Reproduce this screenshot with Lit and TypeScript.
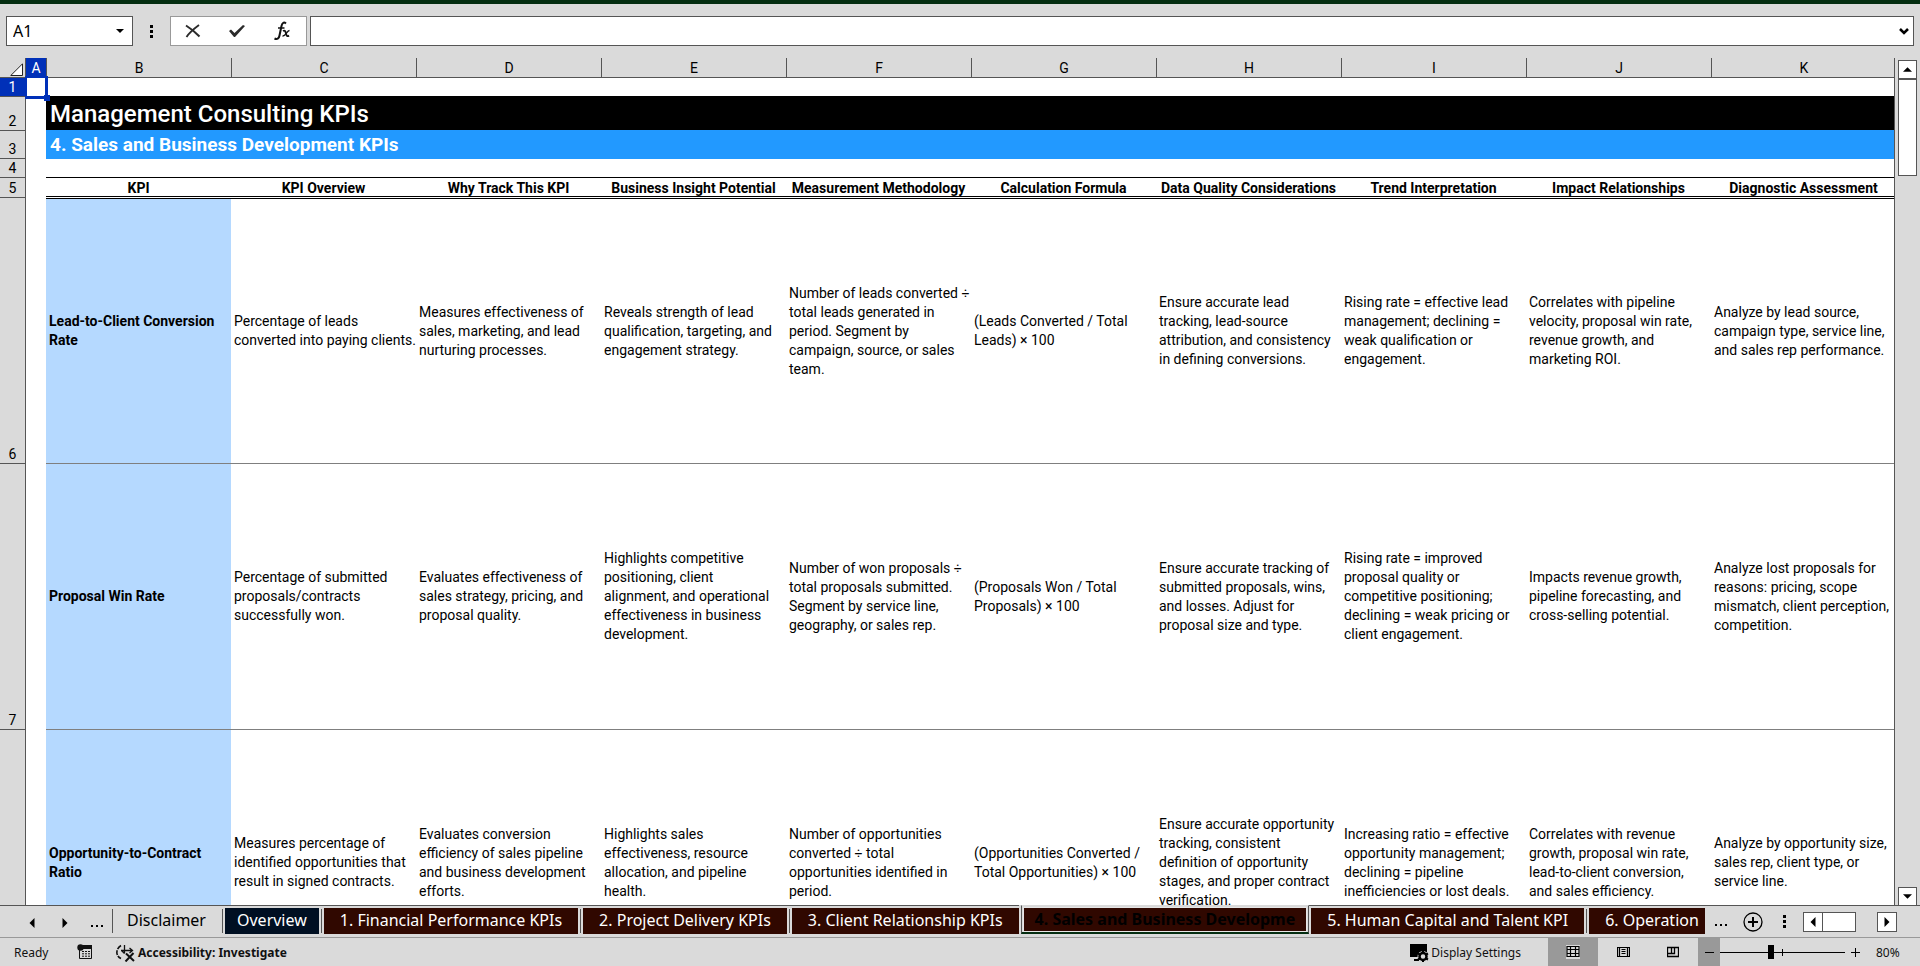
import {LitElement, html, css, svg, nothing} from "lit";
import {customElement, state} from "lit/decorators.js";
import {classMap} from "lit/directives/class-map.js";

const LETTERS = ["B", "C", "D", "E", "F", "G", "H", "I", "J", "K"];

const HEADINGS = [
  "KPI", "KPI Overview", "Why Track This KPI", "Business Insight Potential",
  "Measurement Methodology", "Calculation Formula", "Data Quality Considerations",
  "Trend Interpretation", "Impact Relationships", "Diagnostic Assessment",
];

const KPIS: {row: number; cells: string[]}[] = [
  {
    row: 6,
    cells: [
      "Lead-to-Client Conversion\nRate",
      "Percentage of leads\nconverted into paying clients.",
      "Measures effectiveness of\nsales, marketing, and lead\nnurturing processes.",
      "Reveals strength of lead\nqualification, targeting, and\nengagement strategy.",
      "Number of leads converted ÷\ntotal leads generated in\nperiod. Segment by\ncampaign, source, or sales\nteam.",
      "(Leads Converted / Total\nLeads) × 100",
      "Ensure accurate lead\ntracking, lead-source\nattribution, and consistency\nin defining conversions.",
      "Rising rate = effective lead\nmanagement; declining =\nweak qualification or\nengagement.",
      "Correlates with pipeline\nvelocity, proposal win rate,\nrevenue growth, and\nmarketing ROI.",
      "Analyze by lead source,\ncampaign type, service line,\nand sales rep performance.",
    ],
  },
  {
    row: 7,
    cells: [
      "Proposal Win Rate",
      "Percentage of submitted\nproposals/contracts\nsuccessfully won.",
      "Evaluates effectiveness of\nsales strategy, pricing, and\nproposal quality.",
      "Highlights competitive\npositioning, client\nalignment, and operational\neffectiveness in business\ndevelopment.",
      "Number of won proposals ÷\ntotal proposals submitted.\nSegment by service line,\ngeography, or sales rep.",
      "(Proposals Won / Total\nProposals) × 100",
      "Ensure accurate tracking of\nsubmitted proposals, wins,\nand losses. Adjust for\nproposal size and type.",
      "Rising rate = improved\nproposal quality or\ncompetitive positioning;\ndeclining = weak pricing or\nclient engagement.",
      "Impacts revenue growth,\npipeline forecasting, and\ncross-selling potential.",
      "Analyze lost proposals for\nreasons: pricing, scope\nmismatch, client perception,\ncompetition.",
    ],
  },
  {
    row: 8,
    cells: [
      "Opportunity-to-Contract\nRatio",
      "Measures percentage of\nidentified opportunities that\nresult in signed contracts.",
      "Evaluates conversion\nefficiency of sales pipeline\nand business development\nefforts.",
      "Highlights sales\neffectiveness, resource\nallocation, and pipeline\nhealth.",
      "Number of opportunities\nconverted ÷ total\nopportunities identified in\nperiod.",
      "(Opportunities Converted /\nTotal Opportunities) × 100",
      "Ensure accurate opportunity\ntracking, consistent\ndefinition of opportunity\nstages, and proper contract\nverification.",
      "Increasing ratio = effective\nopportunity management;\ndeclining = pipeline\ninefficiencies or lost deals.",
      "Correlates with revenue\ngrowth, proposal win rate,\nlead-to-client conversion,\nand sales efficiency.",
      "Analyze by opportunity size,\nsales rep, client type, or\nservice line.",
    ],
  },
];

const TABS = [
  {label: "Disclaimer", tone: "plain"},
  {label: "Overview", tone: "navy"},
  {label: "1. Financial Performance KPIs", tone: "maroon"},
  {label: "2. Project Delivery KPIs", tone: "maroon"},
  {label: "3. Client Relationship KPIs", tone: "maroon"},
  {label: "4. Sales and Business Developme", tone: "maroon"},
  {label: "5. Human Capital and Talent KPI", tone: "maroon"},
  {label: "6. Operation", tone: "maroon"},
];

const base = css`
  * { box-sizing: border-box; }
  button {
    margin: 0; padding: 0; border: 0; background: none; color: inherit; font: inherit;
    display: inline-flex; align-items: center; justify-content: center; cursor: pointer;
  }
  input { margin: 0; font: inherit; color: inherit; }
  svg { display: block; flex: none; }
`;

const arrow = (d: string, size = 8) => svg`<svg width=${size} height=${size} viewBox="0 0 8 8"><path d=${d} fill="#000"/></svg>`;
const LEFT = "M6 0v8L2 4z";
const RIGHT = "M2 0v8l4-4z";
const dots = html`<svg width="3" height="15" viewBox="0 0 3 15"><path d="M0 1h3v3H0zM0 6h3v3H0zM0 11h3v3H0z" fill="#000"/></svg>`;

@customElement("formula-bar")
class FormulaBar extends LitElement {
  static styles = [base, css`
    :host {
      display: flex; align-items: center; padding: 12px 6px;
      border-top: 4px solid #032d10; font: 16px "Noto Sans", sans-serif;
    }
    .name {
      display: flex; width: 127px; height: 30px; background: #fff; border: 1px solid #555;
    }
    .name input { flex: 1; min-width: 0; border: 0; padding: 0 0 0 6px; background: none; outline: 0; }
    .name button { width: 24px; }
    .grip { width: 37px; display: flex; justify-content: center; }
    .actions {
      display: flex; width: 137px; height: 30px; background: #fff; border: 1px solid #999;
      margin-right: 3px; padding-right: 2px;
    }
    .actions button { flex: 1; }
    .formula { flex: 1; display: flex; height: 30px; background: #fff; border: 1px solid #555; }
    .formula input { flex: 1; min-width: 0; border: 0; background: none; outline: 0; padding: 0 6px; }
    .formula button { width: 19px; }
  `];

  render() {
    return html`
      <div class="name">
        <input aria-label="Name box" value="A1">
        <button aria-label="Choose a name">${arrow("M0 2h8L4 6z")}</button>
      </div>
      <div class="grip">${dots}</div>
      <div class="actions">
        <button aria-label="Cancel">
          <svg width="16" height="14" viewBox="0 0 16 14" fill="none" stroke="#2b2b2b"><path d="M1 1.500C5 4 11 9 14.500 12.500" stroke-width="2"/><path d="M14 1C10 4 4 9 1.500 13" stroke-width="1.800"/></svg>
        </button>
        <button aria-label="Enter">
          <svg width="18" height="14" viewBox="0 0 18 14"><path d="M1 7l2-1.500 3.500 3.500L15 1l2 1L7 13H6z" fill="#2b2b2b"/></svg>
        </button>
        <button aria-label="Insert function">
          <svg width="18" height="20" viewBox="0 0 18 20" fill="none" stroke="#111"><path d="M13 2.500C11 .800 9.200 1.500 8.500 5L6.500 14.500C6 17.800 4 18.800 1.500 17.500" stroke-width="2"/><path d="M5 7h6.500" stroke-width="1.500"/><path d="M10 10c2-1.200 2.600.5 3 2.500s1.200 3.500 3 2" stroke-width="1.800"/><path d="M16.500 9.500C14 9.500 12.500 15.500 9.500 15" stroke-width="1.400"/></svg>
        </button>
      </div>
      <div class="formula">
        <input aria-label="Formula">
        <button aria-label="Expand formula bar">
          <svg width="10" height="7" viewBox="0 0 10 7"><path d="M1 1l4 4 4-4" fill="none" stroke="#000" stroke-width="2.500"/></svg>
        </button>
      </div>`;
  }
}

@customElement("sheet-grid")
class SheetGrid extends LitElement {
  static styles = [base, css`
    :host { display: flex; min-height: 0; font: 14px/19px Roboto, sans-serif; color: #000; }
    .view { flex: 1; min-width: 0; overflow: hidden; background: #fff; border-right: 1px solid #555; }
    table { width: calc(100% + 2px); table-layout: fixed; border-collapse: separate; border-spacing: 0; }
    th, td { padding: 0; }
    .num-col { width: 26px; }
    .a-col { width: 20px; }
    .letters th {
      height: 20px; font-weight: 400; background: #dadada; text-align: center; line-height: 18px;
      border-bottom: 1px solid #555; border-left: 1px solid #555;
    }
    .letters .corner, .letters .on { border-left: 0; }
    .letters .corner { border-right: 1px solid #555; }
    .corner svg { margin: 4px 0 1px 10px; }
    .letters .on, .num.on { background: #0030b8; color: #fff; }
    .num {
      font-weight: 400; background: #dadada; text-align: center; vertical-align: bottom;
      border-right: 1px solid #555; border-bottom: 1px solid #555; line-height: 18px;
    }
    .r1 { height: 19px; }
    .r2 { height: 34px; }
    .r3 { height: 28px; }
    .r4 { height: 19px; }
    .r5 { height: 20px; }
    .kpi { height: 266px; }
    .black { border-bottom: 1px solid #000; }
    .title {
      background: #000; color: #fff; border-bottom: 1px solid #2299ff; padding: 0 4px;
      text-align: left; font-size: 24px; line-height: 32px; font-weight: 500;
    }
    .section {
      background: #2299ff; color: #fff; padding: 0 4px;
      text-align: left; font-size: 19px; line-height: 26px; font-weight: 700;
    }
    .heading {
      font-weight: 700; text-align: center; line-height: 18px; white-space: nowrap;
      border-bottom: 1px solid #fff; box-shadow: inset 0 -1px #000;
    }
    .cell, .label { text-align: left; vertical-align: middle; white-space: pre; padding: 0 3px; border-bottom: 1px solid #7f7f7f; }
    .label { background: #b5d9ff; font-weight: 700; }
    .first .cell, .first .label { border-top: 1px solid #000; }
    .cursor { position: relative; }
    .cursor::before {
      content: ""; position: absolute; inset: -2px -2px -2px -1px;
      border: 2px solid #0030b8; border-right-width: 3px; border-bottom-width: 3px;
    }
    .cursor::after {
      content: ""; position: absolute; right: -4px; bottom: -4px; width: 6px; height: 6px; background: #0030b8;
    }
    .scroll { width: 25px; display: flex; flex-direction: column; padding: 2px 3px 0; margin-bottom: -1px; z-index: 1; }
    .scroll button { height: 19px; border: 1px solid #555; background: #fff; flex: none; }
    .thumb { height: 97px; border: 1px solid #555; background: #fff; }
    .track { flex: 1; }
  `];

  render() {
    return html`
      <div class="view">
        <table>
          <colgroup><col class="num-col"><col class="a-col">${LETTERS.map(() => html`<col>`)}</colgroup>
          <thead>
            <tr class="letters">
              <th class="corner"><svg width="13" height="13" viewBox="0 0 13 13"><path d="M12.500.8v11.700H.8z" fill="#fff" stroke="#222"/></svg></th>
              <th class="on">A</th>
              ${LETTERS.map((l) => html`<th>${l}</th>`)}
            </tr>
          </thead>
          <tbody>
            <tr class="r1"><th class="num on">1</th><td class="cursor"></td><td class="black" colspan="10"></td></tr>
            <tr class="r2"><th class="num">2</th><td></td><th class="title" colspan="10">Management Consulting KPIs</th></tr>
            <tr class="r3"><th class="num">3</th><td></td><th class="section" colspan="10">4. Sales and Business Development KPIs</th></tr>
            <tr class="r4"><th class="num">4</th><td></td><td class="black" colspan="10"></td></tr>
            <tr class="r5"><th class="num">5</th><td></td>${HEADINGS.map((h) => html`<th class="heading">${h}</th>`)}</tr>
            ${KPIS.map((k, i) => html`
              <tr class=${classMap({kpi: true, first: i === 0})}>
                <th class="num">${k.row}</th><td></td>
                ${k.cells.map((c, j) => j === 0 ? html`<th class="label">${c}</th>` : html`<td class="cell">${c}</td>`)}
              </tr>`)}
          </tbody>
        </table>
      </div>
      <div class="scroll">
        <button aria-label="Scroll up">${arrow("M0 6h8L4 2z", 9)}</button>
        <div class="thumb"></div>
        <div class="track"></div>
        <button aria-label="Scroll down">${arrow("M0 2h8L4 6z", 9)}</button>
      </div>`;
  }
}

@customElement("sheet-tabs")
class SheetTabs extends LitElement {
  @state() private active = 5;

  static styles = [base, css`
    :host { display: flex; height: 32px; font: 16px/22px "Noto Sans", sans-serif; }
    .nav {
      width: 112px; display: flex; align-items: center; padding: 2px 9px 0 26px; justify-content: space-between;
      border-top: 1px solid #555;
    }
    .nav button { width: 12px; height: 20px; }
    .tabs { flex: 1; min-width: 0; display: flex; overflow: hidden; margin: 0; padding: 0; list-style: none; }
    .item { display: flex; flex: none; border-top: 1px solid #555; padding-top: 2px; height: 29px; }
    .item::before { content: ""; width: 1px; height: 24px; background: #555; margin: 1px 2px 0; }
    .item:first-child::before { margin: 1px 0 0; }
    .tab { padding: 1px 16px 3px; white-space: nowrap; height: 26px; }
    .plain { padding: 1px 14px 3px; }
    .navy { background: #000f22; color: #fff; padding: 1px 12px 3px; }
    .maroon { background: #300800; color: #fff; }
    .item.current {
      border: 1px solid #555; border-top-color: transparent; border-bottom: 2px solid #032d10;
      padding: 1px 1px 0; margin-left: 2px;
    }
    .item.current::before { display: none; }
    .item.current .tab { border: 1px solid #e6e6e6; height: 25px; padding: 0 11px 1px; color: #000; font-weight: 700; }
    .item.current + .item::before { background: none; width: 0; margin: 0 1px; }
    .tail { width: 215px; display: flex; align-items: center; padding-left: 4px; }
    .tail::before { content: ""; }
    .ell { width: 24px; height: 16px; }
    .add { width: 20px; margin: 0 20px 0 10px; }
    .grip { width: 3px; display: flex; margin-right: 17px; }
    .bar { display: flex; height: 20px; }
    .bar button { width: 20px; border: 1px solid #555; background: #fff; }
    .thumb { width: 33px; border: 1px solid #555; border-left: 0; background: #fff; }
    .space { width: 21px; }
    .line { border-top: 1px solid #555; }
  `];

  render() {
    const ellipsis = html`<svg width="13" height="10" viewBox="0 0 13 10"><path d="M0 7h2v2H0zM5 7h2v2H5zM10 7h2v2h-2z" fill="#000"/></svg>`;
    return html`
      <div class="nav">
        <button aria-label="Previous sheet">${arrow(LEFT, 10)}</button>
        <button aria-label="Next sheet">${arrow(RIGHT, 10)}</button>
        <button aria-label="More sheets before">${ellipsis}</button>
      </div>
      <ul class="tabs">
        ${TABS.map((t, i) => html`
          <li class=${classMap({item: true, current: i === this.active})}>
            <button class="tab ${t.tone}" aria-current=${i === this.active ? "page" : nothing} @click=${() => { this.active = i; }}>${t.label}</button>
          </li>`)}
      </ul>
      <div class="tail line">
        <button class="ell" aria-label="More sheets after">${ellipsis}</button>
        <button class="add" aria-label="New sheet">
          <svg width="20" height="20" viewBox="0 0 20 20" fill="none" stroke="#000"><circle cx="10" cy="10" r="9" stroke-width="1.300"/><path d="M10 5v10M5 10h10" stroke-width="2"/></svg>
        </button>
        <div class="grip">${dots}</div>
        <div class="bar">
          <button aria-label="Scroll left">${arrow(LEFT, 10)}</button>
          <div class="thumb"></div>
          <div class="space"></div>
          <button aria-label="Scroll right">${arrow(RIGHT, 10)}</button>
        </div>
      </div>`;
  }
}

@customElement("status-bar")
class StatusBar extends LitElement {
  @state() private zoom = 80;

  static styles = [base, css`
    :host {
      display: flex; align-items: stretch; height: 28px; border-top: 1px solid #999;
      font: 12px/18px "Noto Sans", sans-serif; color: #111;
    }
    .ready { padding: 1px 0 0 14px; width: 77px; align-self: center; }
    .macro { width: 39px; justify-content: flex-start; }
    .access { font-weight: 700; gap: 3px; padding-top: 1px; }
    .fill { flex: 1; }
    .display { gap: 2px; margin-right: 27px; padding-top: 1px; }
    .view { width: 50px; }
    .view.on { background: #999; }
    .view.on svg { background: #dadada; }
    .minus { width: 22px; background: #999; }
    .plus { width: 20px; }
    .slider { appearance: none; width: 125px; background:
      linear-gradient(#000, #000) center / 100% 1px no-repeat,
      linear-gradient(#000, #000) center / 1px 7px no-repeat; }
    .slider::-webkit-slider-thumb { appearance: none; width: 6px; height: 14px; background: #000; border: 0; }
    .pct { width: 55px; padding: 1px 0 0 11px; justify-content: flex-start; }
  `];

  render() {
    return html`
      <span class="ready">Ready</span>
      <button class="macro" aria-label="Record macro">
        <svg width="16" height="16" viewBox="0 0 16 16"><path d="M2.500 5v9.500h12V3" fill="none" stroke="#111"/><path d="M6 1h9v4H6z" fill="#111"/><circle cx="3.500" cy="3.500" r="3.200" fill="#111"/><path d="M5 7.500h2M8 7.500h2M11 7.500h2M5 9.800h2M8 9.800h2M11 9.800h2M5 12.200h2M8 12.200h2M11 12.200h2" stroke="#111"/></svg>
      </button>
      <button class="access">
        <svg width="19" height="18" viewBox="0 0 19 18" fill="none" stroke="#111"><path d="M5 1.500C-.5 5-.5 12 5 14.500" stroke-width="1.600" stroke-dasharray="5 1"/><path d="M8.500 1v8.500M5.500 6.500l3 3M5 6.500h11M13.500 4l3 2.500-3 2.500" stroke-width="1.300"/><path d="M10 9.500l8 7.500M17.500 9l-8 8.500" stroke-width="2"/></svg>
        Accessibility: Investigate
      </button>
      <div class="fill"></div>
      <button class="display">
        <svg width="19" height="18" viewBox="0 0 19 18"><path d="M0 0h17v9H11l-2 4H0zM4 15h5v2H4z" fill="#000"/><circle cx="13" cy="12.500" r="4" fill="none" stroke="#dadada" stroke-width="3"/><circle cx="13" cy="12.500" r="3.500" fill="#dadada" stroke="#000" stroke-width="2.500"/><path d="M13 7v2M13 16v2M8 9.500l2 1M16 14.500l2 1M8 15.500l2-1M16 10.500l2-1" stroke="#000" stroke-width="2"/></svg>
        Display Settings
      </button>
      <button class="view on" aria-label="Normal view">
        <svg width="14" height="14" viewBox="0 0 14 14" fill="none" stroke="#000" stroke-width="1.200"><path d="M1 1.500h12v10H1zM1 4.500h12M1 8.500h12M4.500 1v11M9.500 1v11"/></svg>
      </button>
      <button class="view" aria-label="Page layout">
        <svg width="13" height="12" viewBox="0 0 13 12" fill="none" stroke="#000" stroke-width="1.200"><path d="M.5 1.500h12v9H.5zM2.500 1.500v9M10.500 1.500v9M4.500 3.500h4M4.500 5.500h4M4.500 7.500h4"/></svg>
      </button>
      <button class="view" aria-label="Page break preview">
        <svg width="12" height="12" viewBox="0 0 12 12" fill="none" stroke="#000"><path d="M.5 1.500h11v9H.5zM.5 7.500h7v-6M4.500 1.500v6" stroke-width="1.300"/></svg>
      </button>
      <button class="minus" aria-label="Zoom out" @click=${() => { this.zoom = Math.max(10, this.zoom - 10); }}>
        <svg width="9" height="9" viewBox="0 0 9 9"><path d="M0 4.500h9" stroke="#000"/></svg>
      </button>
      <input class="slider" type="range" aria-label="Zoom" min="0" max="200" .value=${String(this.zoom)}
        @input=${(e: Event) => { this.zoom = Number((e.target as HTMLInputElement).value); }}>
      <button class="plus" aria-label="Zoom in" @click=${() => { this.zoom = Math.min(200, this.zoom + 10); }}>
        <svg width="9" height="9" viewBox="0 0 9 9"><path d="M0 4.500h9M4.500 0v9" stroke="#000"/></svg>
      </button>
      <button class="pct">${this.zoom}%</button>`;
  }
}

@customElement("app-root")
class AppRoot extends LitElement {
  static styles = css`
    :host { display: flex; flex-direction: column; height: 100vh; overflow: hidden; background: #dadada; }
    .grid { flex: 1; }
  `;

  render() {
    return html`
      <formula-bar></formula-bar>
      <sheet-grid class="grid"></sheet-grid>
      <sheet-tabs></sheet-tabs>
      <status-bar></status-bar>`;
  }
}
